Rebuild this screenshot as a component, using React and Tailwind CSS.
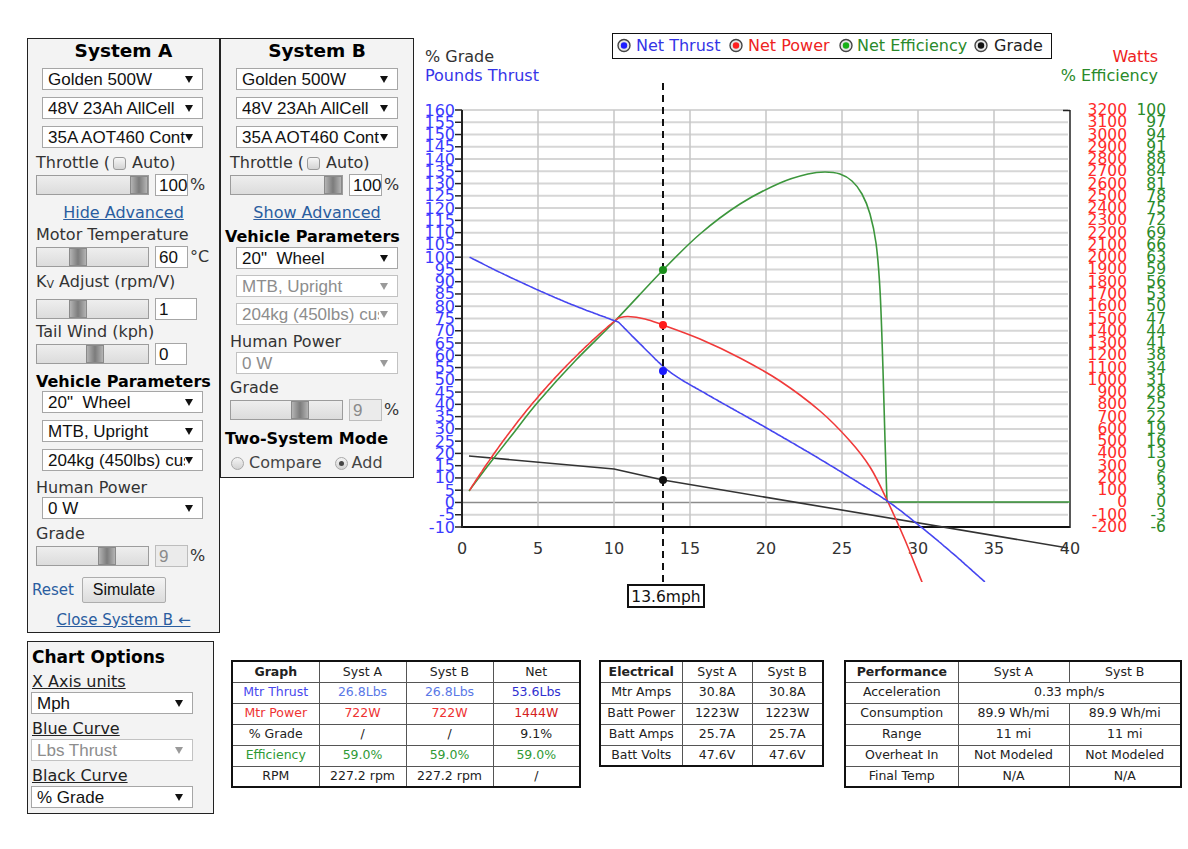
import React from "react";

const X = (m) => 462 + m * 15.2;
const Y = (v) => 527 - (v + 10) * (417 / 170);
const f = (n) => n.toFixed(1);

function hermite(pts) {
  const n = pts.length;
  const tg = pts.map((p, i) => {
    if (i === 0) return (pts[1][1] - p[1]) / (pts[1][0] - p[0]);
    if (i === n - 1) return (p[1] - pts[n - 2][1]) / (p[0] - pts[n - 2][0]);
    return (pts[i + 1][1] - pts[i - 1][1]) / (pts[i + 1][0] - pts[i - 1][0]);
  });
  return (x) => {
    let i = 0;
    while (i < n - 2 && x > pts[i + 1][0]) i++;
    const [x0, y0] = pts[i];
    const [x1, y1] = pts[i + 1];
    const h = x1 - x0;
    const t = (x - x0) / h;
    const t2 = t * t;
    const t3 = t2 * t;
    return (
      (2 * t3 - 3 * t2 + 1) * y0 +
      (t3 - 2 * t2 + t) * h * tg[i] +
      (-2 * t3 + 3 * t2) * y1 +
      (t3 - t2) * h * tg[i + 1]
    );
  };
}

function crPath(pts, move = true) {
  let d = move ? `M${pts[0][0]},${pts[0][1]}` : "";
  for (let i = 0; i < pts.length - 1; i++) {
    const p0 = pts[i - 1] || pts[i];
    const p1 = pts[i];
    const p2 = pts[i + 1];
    const p3 = pts[i + 2] || p2;
    const c1 = [p1[0] + (p2[0] - p0[0]) / 6, p1[1] + (p2[1] - p0[1]) / 6];
    const c2 = [p2[0] - (p3[0] - p1[0]) / 6, p2[1] - (p3[1] - p1[1]) / 6];
    d += ` C${f(c1[0])},${f(c1[1])} ${f(c2[0])},${f(c2[1])} ${p2[0]},${p2[1]}`;
  }
  return d;
}

function Chart() {
  const vals = Array.from({ length: 35 }, (_, i) => 160 - 5 * i);
  const seg1 = [
    [0.5, 100],
    [2.5, 93.8],
    [5, 86.6],
    [7.5, 80],
    [10.3, 73.5],
  ];
  const seg2 = [
    [10.3, 73.5],
    [11.5, 66],
    [13.6, 53.6],
    [16, 44.5],
    [20, 30.5],
    [24, 16],
    [28, 0.5],
    [30, -9],
    [32.2, -20.3],
    [34.4, -32.4],
  ];
  const h1 = hermite(seg1);
  const h2 = hermite(seg2);
  const T = (m) => (m <= 10.3 ? h1(m) : h2(m));
  const ms = [];
  for (let m = 0.5; m < 10.29; m += 0.1) ms.push(m);
  ms.push(10.3);
  const ms2 = [];
  for (let m = 10.4; m < 34.39; m += 0.1) ms2.push(m);
  ms2.push(34.4);
  const bluePts = [...ms, ...ms2].map((m) => `${f(X(m))},${f(Y(T(m)))}`).join(" ");
  const redBefore = ms.map((m) => {
    const w = T(m) * m * 1.988;
    return [Number(f(X(m))), Number(f(Y(-10 + (w + 200) / 20)))];
  });
  const knee = redBefore[redBefore.length - 1];
  const redAfter = [
    knee,
    [628, 316.5],
    [645, 319],
    [663, 325],
    [700, 339],
    [740, 358],
    [780, 381],
    [820, 411],
    [850, 441],
    [870, 467],
    [887, 500],
    [905, 540],
    [922, 582],
    [930, 602],
  ];
  const redD =
    "M" + redBefore.map((p) => `${p[0]},${p[1]}`).join(" L") + crPath(redAfter, false);
  const green = [
    [469, 491], [490, 463], [512, 435], [538, 402], [576, 360], [614, 322],
    [663, 270], [700, 234], [740, 204], [780, 183], [808, 174], [825, 172],
    [840, 174], [852, 181], [862, 194], [870, 214], [876, 243], [880, 290],
    [883, 370], [885, 440], [887, 502],
  ];
  const greenD = crPath(green) + " L1070,502";
  const font = "DejaVu Sans, sans-serif";
  const legend = [
    { cx: 624, tx: 636, t: "Net Thrust", c: "#3434e6", d: "#1f1fff" },
    { cx: 736, tx: 748, t: "Net Power", c: "#ee2222", d: "#ff2020" },
    { cx: 846, tx: 857, t: "Net Efficiency", c: "#2a8a2a", d: "#18b018" },
    { cx: 981, tx: 994, t: "Grade", c: "#222222", d: "#111111" },
  ];
  return (
    <svg width="774" height="582" viewBox="414 30 774 582" className="block shrink-0" fontFamily={font}>
      <defs>
        <clipPath id="plotclip">
          <rect x="414" y="30" width="774" height="552" />
        </clipPath>
      </defs>
      {vals.map((v) => (
        <line
          key={"h" + v}
          x1="462"
          x2="1068"
          y1={Y(v)}
          y2={Y(v)}
          stroke={v === 0 ? "#8c8c8c" : "#d6d6d6"}
          strokeWidth={v === 0 ? 1.6 : 2}
        />
      ))}
      {[5, 10, 15, 20, 25, 30, 35].map((m) => (
        <line key={"v" + m} x1={X(m)} x2={X(m)} y1="110" y2="527" stroke="#c6c6c6" strokeWidth="1.5" />
      ))}
      <line x1="462" x2="1070" y1="527" y2="527" stroke="#111" strokeWidth="2" />
      <line x1="462" x2="462" y1="110" y2="528" stroke="#222" strokeWidth="2" />
      <line x1="1070" x2="1070" y1="110" y2="528" stroke="#222" strokeWidth="1.5" />
      <line x1="1063" x2="1070" y1="110.5" y2="110.5" stroke="#222" strokeWidth="1.5" />
      {vals.map((v) => (
        <line key={"t" + v} x1="455" x2="462" y1={Y(v)} y2={Y(v)} stroke="#222" strokeWidth="1.5" />
      ))}
      {vals.map((v) => (
        <text key={"l" + v} x="455" y={Y(v)} textAnchor="end" dominantBaseline="central" fontSize="16" fill="#3a3aff">
          {v}
        </text>
      ))}
      {vals.map((v, i) => {
        const w = 3200 - 100 * i;
        return (
          <g key={"r" + v}>
            <text x="1127" y={Y(v)} textAnchor="end" dominantBaseline="central" fontSize="15.5" fill="#ff2a2a">
              {w}
            </text>
            <text x="1166" y={Y(v)} textAnchor="end" dominantBaseline="central" fontSize="15.5" fill="#2a8a2a">
              {Math.round(w / 32)}
            </text>
          </g>
        );
      })}
      {[0, 5, 10, 15, 20, 25, 30, 35, 40].map((m) => (
        <text key={"x" + m} x={X(m)} y="548" textAnchor="middle" dominantBaseline="central" fontSize="16" fill="#333">
          {m}
        </text>
      ))}
      <text x="425" y="56" dominantBaseline="central" fontSize="16" fill="#333">% Grade</text>
      <text x="425" y="75" dominantBaseline="central" fontSize="16" fill="#3535e8">Pounds Thrust</text>
      <text x="1158" y="56" textAnchor="end" dominantBaseline="central" fontSize="16" fill="#ee2222">Watts</text>
      <text x="1158" y="75" textAnchor="end" dominantBaseline="central" fontSize="16" fill="#2a8a2a">% Efficiency</text>
      <g clipPath="url(#plotclip)" fill="none" strokeWidth="1.6" strokeLinejoin="round">
        <polyline points="469,456 614,469 663,480 1068,548" stroke="#333" />
        <path d={greenD} stroke="#3c963c" />
        <path d={redD} stroke="#f03a3a" />
        <polyline points={bluePts} stroke="#4646f0" />
      </g>
      <line x1="663" x2="663" y1="83" y2="585" stroke="#111" strokeWidth="2" strokeDasharray="7 5" />
      <circle cx="663" cy="270" r="4" fill="#1a8f1a" />
      <circle cx="663" cy="325" r="4" fill="#ff1a1a" />
      <circle cx="663" cy={Y(53.6)} r="4" fill="#1a1aff" />
      <circle cx="663" cy="480" r="4" fill="#111" />
      <rect x="628" y="585" width="76" height="22" fill="#fff" stroke="#111" strokeWidth="2" />
      <text x="666" y="596.5" textAnchor="middle" dominantBaseline="central" fontSize="15.5" fill="#111">13.6mph</text>
      <rect x="612.5" y="33.5" width="439" height="25" fill="#fff" stroke="#111" strokeWidth="1" />
      {legend.map((l) => (
        <g key={l.t}>
          <circle cx={l.cx} cy="45.5" r="6" fill="#e6e6e6" stroke="#444" strokeWidth="1.4" />
          <circle cx={l.cx} cy="45.5" r="3.2" fill={l.d} />
          <text x={l.tx} y="45.5" dominantBaseline="central" fontSize="16" fill={l.c}>
            {l.t}
          </text>
        </g>
      ))}
    </svg>
  );
}

function Arrow({ disabled }) {
  return (
    <svg width="8" height="7" viewBox="0 0 8 7" className="block shrink-0">
      <path d="M0 0 H8 L4 7 Z" fill={disabled ? "#9a9a9a" : "#111"} />
    </svg>
  );
}

function Sel({ children, cls = "", disabled = false }) {
  return (
    <div
      className={
        "flex h-[22px] shrink-0 items-center justify-between border pl-[5px] pr-[9px] font-['Liberation_Sans',Arial,sans-serif] text-[17px] leading-none " +
        (disabled ? "border-[#c2c2c2] bg-white text-[#8d8d8d] " : "border-[#a6a6a6] bg-white text-[#111] ") +
        cls
      }
    >
      <span className="block w-[137px] shrink-0 overflow-hidden whitespace-nowrap">{children}</span>
      <Arrow disabled={disabled} />
    </div>
  );
}

function Slider({ thumb }) {
  return (
    <div className="relative h-[20px] w-[113px] shrink-0 border border-[#9c9c9c] bg-linear-to-b from-[#eeeeee] to-[#dcdcdc]">
      <div className={"absolute top-0 h-[18px] w-[18px] border border-[#8a8a8a] bg-linear-to-r from-[#b4b4b4] via-[#7c7c7c] to-[#b4b4b4] " + thumb} />
    </div>
  );
}

function Num({ value, cls = "", disabled = false }) {
  return (
    <div
      className={
        "flex h-[22px] shrink-0 items-center border pl-[3px] font-['Liberation_Sans',Arial,sans-serif] text-[17px] leading-none " +
        (disabled ? "border-[#bdbdbd] bg-[#ebebeb] text-[#8a8a8a] " : "border-[#a6a6a6] bg-white text-[#111] ") +
        cls
      }
    >
      {value}
    </div>
  );
}

function Row({ thumb, value, unit, w = "w-[33px]", disabled = false }) {
  return (
    <div className="flex h-[22px] items-center leading-none">
      <Slider thumb={thumb} />
      <Num value={value} cls={"ml-[6px] " + w} disabled={disabled} />
      <span className="ml-[2px]">{unit}</span>
    </div>
  );
}

function Check() {
  return (
    <span className="ml-[3px] mr-[6px] inline-block h-[13px] w-[13px] shrink-0 rounded-[3px] border border-[#9a9a9a] bg-linear-to-b from-[#f6f6f6] to-[#d4d4d4]" />
  );
}

function Radio({ checked }) {
  return (
    <span className="flex h-[13px] w-[13px] shrink-0 items-center justify-center rounded-full border border-[#a8a8a8] bg-linear-to-b from-[#f4f4f4] to-[#d2d2d2]">
      {checked ? <span className="block h-[5px] w-[5px] rounded-full bg-[#444]" /> : null}
    </span>
  );
}

function Label({ children, cls = "" }) {
  return <div className={"flex h-[22px] items-center leading-none whitespace-nowrap " + cls}>{children}</div>;
}

function SystemA() {
  return (
    <div className="mt-[8px] box-border flex h-[595px] w-[193px] shrink-0 flex-col border border-[#222] bg-[#f3f3f3] pl-[8px]">
      <div className="flex h-[25px] items-center justify-center pr-[8px] text-[18.5px] font-bold leading-none text-black">System A</div>
      <Sel cls="mt-[4px] ml-[6px] w-[161px]">Golden 500W</Sel>
      <Sel cls="mt-[7px] ml-[6px] w-[161px]">48V 23Ah AllCell</Sel>
      <Sel cls="mt-[7px] ml-[6px] w-[161px]">35A AOT460 Controller</Sel>
      <Label cls="mt-[4px]">
        Throttle (<Check />Auto)
      </Label>
      <Row thumb="left-[93px]" value="100" unit="%" />
      <div className="mt-[7px] flex h-[20px] items-center justify-center pr-[8px] leading-none text-[#2a5d9f] underline">Hide Advanced</div>
      <Label cls="mt-[1px]">Motor Temperature</Label>
      <Row thumb="left-[32px]" value="60" unit="°C" />
      <Label cls="mt-[3px]">
        K<sub className="text-[11px]">V</sub>&nbsp;Adjust (rpm/V)
      </Label>
      <div className="mt-[5px]">
        <Row thumb="left-[32px]" value="1" unit="" w="w-[42px]" />
      </div>
      <Label cls="mt-[1px]">Tail Wind (kph)</Label>
      <Row thumb="left-[49px]" value="0" unit="" w="w-[32px]" />
      <div className="mt-[7px] flex h-[20px] items-center font-bold leading-none text-black whitespace-nowrap">Vehicle Parameters</div>
      <Sel cls="-mt-px ml-[6px] w-[161px]">20"&nbsp; Wheel</Sel>
      <Sel cls="mt-[7px] ml-[6px] w-[161px]">MTB, Upright</Sel>
      <Sel cls="mt-[7px] ml-[6px] w-[161px]">204kg (450lbs) custom</Sel>
      <Label cls="mt-[6px]">Human Power</Label>
      <Sel cls="-mt-[2px] ml-[6px] w-[161px]">0 W</Sel>
      <Label cls="mt-[4px]">Grade</Label>
      <Row thumb="left-[61px]" value="9" unit="%" disabled />
      <div className="mt-[10px] flex h-[26px] items-center">
        <span className="-ml-[4px] text-[15px] leading-none text-[#2a5d9f]">Reset</span>
        <div className="ml-[8px] flex h-[26px] w-[84px] items-center justify-center rounded-[2px] border border-[#adadad] bg-linear-to-b from-[#f4f4f4] to-[#dcdcdc] font-['Liberation_Sans',Arial,sans-serif] text-[16px] leading-none text-[#111]">
          Simulate
        </div>
      </div>
      <div className="mt-[7px] flex h-[20px] items-center justify-center pr-[8px] text-[15px] leading-none text-[#2a5d9f] underline whitespace-nowrap">
        Close System B ←
      </div>
    </div>
  );
}

function SystemB() {
  return (
    <div className="mt-[8px] box-border flex h-[440px] w-[194px] shrink-0 flex-col border border-[#222] bg-[#f3f3f3] pl-[9px]">
      <div className="flex h-[25px] items-center justify-center pr-[9px] text-[18.5px] font-bold leading-none text-black">System B</div>
      <Sel cls="mt-[4px] ml-[6px] w-[162px]">Golden 500W</Sel>
      <Sel cls="mt-[7px] ml-[6px] w-[162px]">48V 23Ah AllCell</Sel>
      <Sel cls="mt-[7px] ml-[6px] w-[162px]">35A AOT460 Controller</Sel>
      <Label cls="mt-[4px]">
        Throttle (<Check />Auto)
      </Label>
      <Row thumb="left-[93px]" value="100" unit="%" />
      <div className="mt-[7px] flex h-[20px] items-center justify-center pr-[9px] leading-none text-[#2a5d9f] underline">Show Advanced</div>
      <Label cls="mt-[3px] -ml-[5px] font-bold text-black">Vehicle Parameters</Label>
      <Sel cls="-mt-px ml-[6px] w-[162px]">20"&nbsp; Wheel</Sel>
      <Sel cls="mt-[6px] ml-[6px] w-[162px]" disabled>
        MTB, Upright
      </Sel>
      <Sel cls="mt-[6px] ml-[6px] w-[162px]" disabled>
        204kg (450lbs) custom
      </Sel>
      <Label cls="mt-[6px]">Human Power</Label>
      <Sel cls="-mt-px ml-[6px] w-[162px]" disabled>
        0 W
      </Sel>
      <Label cls="mt-[3px]">Grade</Label>
      <Row thumb="left-[60px]" value="9" unit="%" disabled />
      <Label cls="mt-[7px] -ml-[5px] font-bold text-black">Two-System Mode</Label>
      <Label cls="mt-[2px] text-[#444]">
        <span className="ml-px">
          <Radio />
        </span>
        <span className="ml-[5px]">Compare</span>
        <span className="ml-[13px]">
          <Radio checked />
        </span>
        <span className="ml-[4px]">Add</span>
      </Label>
    </div>
  );
}

function ChartOptions() {
  return (
    <div className="box-border flex h-[173px] w-[187px] shrink-0 flex-col border border-[#222] bg-[#f3f3f3] pl-[4px]">
      <div className="flex h-[30px] items-center text-[17px] font-bold leading-none text-black">Chart Options</div>
      <div className="flex h-[20px] items-center leading-none text-[#222] underline">X Axis units</div>
      <Sel cls="-ml-px w-[162px]">Mph</Sel>
      <Label cls="mt-[4px] text-[#222] underline">Blue Curve</Label>
      <Sel cls="-mt-px -ml-px w-[162px]" disabled>
        Lbs Thrust
      </Sel>
      <Label cls="mt-[4px] text-[#222] underline">Black Curve</Label>
      <Sel cls="-mt-px -ml-px w-[162px]">% Grade</Sel>
    </div>
  );
}

function DataTable({ widths, width, rows }) {
  return (
    <table className={"table-fixed border-collapse border-2 border-[#111] text-[12.5px] leading-none text-[#222] " + width}>
      <colgroup>
        {widths.map((w, i) => (
          <col key={i} className={w} />
        ))}
      </colgroup>
      <tbody>
        {rows.map((r, i) => (
          <tr key={i}>
            {r.map((c, j) => (
              <td key={j} colSpan={c.span || 1} className={"h-[21px] border border-[#555] p-0 text-center whitespace-nowrap " + (c.cls || "")}>
                {c.t}
              </td>
            ))}
          </tr>
        ))}
      </tbody>
    </table>
  );
}

const B = "text-[#4848ee]";
const B2 = "text-[#5a78e6]";
const B3 = "text-[#3030d0]";
const R = "text-[#ee3333]";
const R3 = "text-[#d42020]";
const G = "text-[#2f9a35]";

export default function App() {
  const t1 = [
    [{ t: "Graph", cls: "font-bold" }, { t: "Syst A" }, { t: "Syst B" }, { t: "Net" }],
    [{ t: "Mtr Thrust", cls: B }, { t: "26.8Lbs", cls: B2 }, { t: "26.8Lbs", cls: B2 }, { t: "53.6Lbs", cls: B3 }],
    [{ t: "Mtr Power", cls: R }, { t: "722W", cls: R }, { t: "722W", cls: R }, { t: "1444W", cls: R3 }],
    [{ t: "% Grade" }, { t: "/" }, { t: "/" }, { t: "9.1%" }],
    [{ t: "Efficiency", cls: G }, { t: "59.0%", cls: G }, { t: "59.0%", cls: G }, { t: "59.0%", cls: G }],
    [{ t: "RPM" }, { t: "227.2 rpm" }, { t: "227.2 rpm" }, { t: "/" }],
  ];
  const t2 = [
    [{ t: "Electrical", cls: "font-bold" }, { t: "Syst A" }, { t: "Syst B" }],
    [{ t: "Mtr Amps" }, { t: "30.8A" }, { t: "30.8A" }],
    [{ t: "Batt Power" }, { t: "1223W" }, { t: "1223W" }],
    [{ t: "Batt Amps" }, { t: "25.7A" }, { t: "25.7A" }],
    [{ t: "Batt Volts" }, { t: "47.6V" }, { t: "47.6V" }],
  ];
  const t3 = [
    [{ t: "Performance", cls: "font-bold" }, { t: "Syst A" }, { t: "Syst B" }],
    [{ t: "Acceleration" }, { t: "0.33 mph/s", span: 2 }],
    [{ t: "Consumption" }, { t: "89.9 Wh/mi" }, { t: "89.9 Wh/mi" }],
    [{ t: "Range" }, { t: "11 mi" }, { t: "11 mi" }],
    [{ t: "Overheat In" }, { t: "Not Modeled" }, { t: "Not Modeled" }],
    [{ t: "Final Temp" }, { t: "N/A" }, { t: "N/A" }],
  ];
  return (
    <div className="h-[849px] w-[1188px] overflow-hidden bg-white font-['DejaVu_Sans',sans-serif] text-[16px] text-[#333]">
      <div className="flex items-start pl-[27px] pt-[30px]">
        <SystemA />
        <SystemB />
        <Chart />
      </div>
      <div className="mt-[8px] flex items-start pl-[27px]">
        <ChartOptions />
        <div className="ml-[17px] mt-[19px]">
          <DataTable widths={["w-[87px]", "w-[87px]", "w-[87px]", "w-[87px]"]} width="w-[348px]" rows={t1} />
        </div>
        <div className="ml-[18px] mt-[19px]">
          <DataTable widths={["w-[82px]", "w-[70px]", "w-[71px]"]} width="w-[223px]" rows={t2} />
        </div>
        <div className="ml-[20px] mt-[19px]">
          <DataTable widths={["w-[113px]", "w-[111px]", "w-[112px]"]} width="w-[336px]" rows={t3} />
        </div>
      </div>
    </div>
  );
}
